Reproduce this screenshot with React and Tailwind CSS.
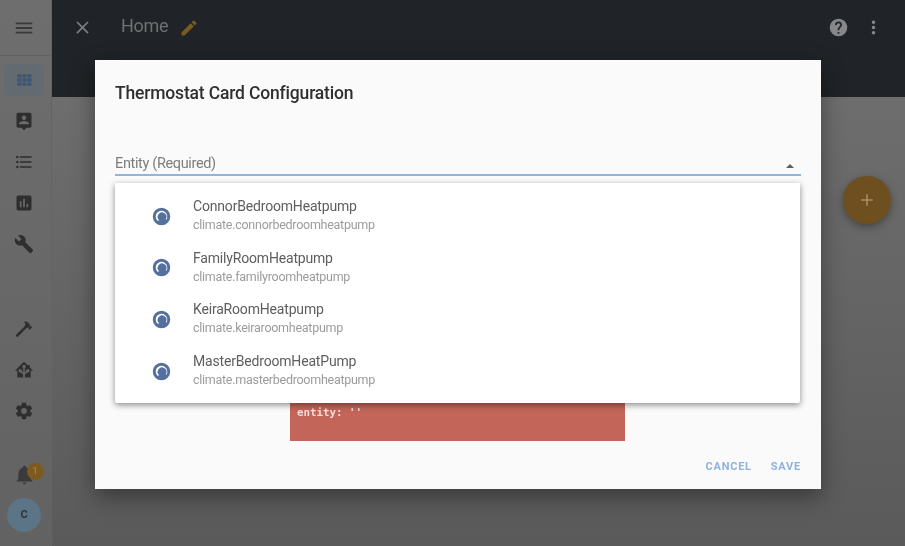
const paths = {
  menu: 'M3,6H21V8H3V6M3,11H21V13H3V11M3,16H21V18H3V16Z',
  close: 'M19,6.41L17.59,5L12,10.59L6.41,5L5,6.41L10.59,12L5,17.59L6.41,19L12,13.41L17.59,19L19,17.59L13.41,12L19,6.41Z',
  pencil: 'M20.71,7.04C21.1,6.65 21.1,6 20.71,5.63L18.37,3.29C18,2.9 17.35,2.9 16.96,3.29L15.12,5.12L18.87,8.87M3,17.25V21H6.75L17.81,9.93L14.06,6.18L3,17.25Z',
  help: 'M15.07,11.25L14.17,12.17C13.45,12.89 13,13.5 13,15H11V14.5C11,13.39 11.45,12.39 12.17,11.67L13.41,10.41C13.78,10.05 14,9.55 14,9C14,7.89 13.1,7 12,7A2,2 0 0,0 10,9H8A4,4 0 0,1 12,5A4,4 0 0,1 16,9C16,9.88 15.64,10.67 15.07,11.25M13,19H11V17H13M12,2A10,10 0 0,0 2,12A10,10 0 0,0 12,22A10,10 0 0,0 22,12C22,6.47 17.5,2 12,2Z',
  dots: 'M12,16A2,2 0 0,1 14,18A2,2 0 0,1 12,20A2,2 0 0,1 10,18A2,2 0 0,1 12,16M12,10A2,2 0 0,1 14,12A2,2 0 0,1 12,14A2,2 0 0,1 10,12A2,2 0 0,1 12,10M12,4A2,2 0 0,1 14,6A2,2 0 0,1 12,8A2,2 0 0,1 10,6A2,2 0 0,1 12,4Z',
  grid: 'M4,5H9V9H4ZM10,5H15V9H10ZM16,5H21V9H16ZM4,10H9V14H4ZM10,10H15V14H10ZM16,10H21V14H16ZM4,15H9V19H4ZM10,15H15V19H10ZM16,15H21V19H16Z',
  map: 'M18,16H6V15.1C6,13.1 10,12 12,12C14,12 18,13.1 18,15.1M12,5.3C13.5,5.3 14.7,6.5 14.7,8C14.7,9.5 13.5,10.7 12,10.7C10.5,10.7 9.3,9.5 9.3,8C9.3,6.5 10.5,5.3 12,5.3M19,2H5C3.89,2 3,2.89 3,4V18A2,2 0 0,0 5,20H9L12,23L15,20H19A2,2 0 0,0 21,18V4C21,2.89 20.1,2 19,2Z',
  list: 'M7,5H21V7H7V5M7,13V11H21V13H7M4,4.5A1.5,1.5 0 0,1 5.5,6A1.5,1.5 0 0,1 4,7.5A1.5,1.5 0 0,1 2.5,6A1.5,1.5 0 0,1 4,4.5M4,10.5A1.5,1.5 0 0,1 5.5,12A1.5,1.5 0 0,1 4,13.5A1.5,1.5 0 0,1 2.5,12A1.5,1.5 0 0,1 4,10.5M7,19V17H21V19H7M4,16.5A1.5,1.5 0 0,1 5.5,18A1.5,1.5 0 0,1 4,19.5A1.5,1.5 0 0,1 2.5,18A1.5,1.5 0 0,1 4,16.5Z',
  chart: 'M19,3H5C3.89,3 3,3.89 3,5V19A2,2 0 0,0 5,21H19A2,2 0 0,0 21,19V5C21,3.89 20.1,3 19,3M9,17H7V10H9V17M13,17H11V7H13V17M17,17H15V13H17V17Z',
  wrench: 'M22.7,19L13.6,9.9C14.5,7.6 14,4.9 12.1,3C10.1,1 7.1,0.6 4.7,1.7L9,6L6,9L1.6,4.7C0.4,7.1 0.9,10.1 2.9,12.1C4.8,14 7.5,14.5 9.8,13.6L18.9,22.7C19.3,23.1 19.9,23.1 20.3,22.7L22.6,20.4C23.1,20 23.1,19.3 22.7,19Z',
  hammer: 'M2 19.63L13.43 8.2L12.72 7.5L14.14 6.07L12 3.89C13.2 2.7 15.09 2.7 16.27 3.89L19.87 7.5L18.45 8.91H21.29L22 9.62L18.45 13.21L17.74 12.5V9.62L16.27 11.04L15.56 10.33L4.13 21.76L2 19.63Z',
  hass: 'M21.8,13H20V21H13V17.67L15.79,14.88L16.5,15C17.66,15 18.6,14.06 18.6,12.9C18.6,11.74 17.66,10.8 16.5,10.8A2.1,2.1 0 0,0 14.4,12.9L14.5,13.61L13,15.13V9.65C13.66,9.29 14.1,8.6 14.1,7.8A2.1,2.1 0 0,0 12,5.7A2.1,2.1 0 0,0 9.9,7.8C9.9,8.6 10.34,9.29 11,9.65V15.13L9.5,13.61L9.6,12.9A2.1,2.1 0 0,0 7.5,10.8A2.1,2.1 0 0,0 5.4,12.9A2.1,2.1 0 0,0 7.5,15L8.21,14.88L11,17.67V21H4V13H2.25C1.83,13 1.42,13 1.42,12.79C1.43,12.57 1.85,12.15 2.28,11.72L11,3C11.33,2.67 11.67,2.33 12,2.33C12.33,2.33 12.67,2.67 13,3L17,7V6H19V9L21.78,11.78C22.18,12.18 22.59,12.59 22.6,12.8C22.6,13 22.2,13 21.8,13Z',
  cog: 'M12,15.5A3.5,3.5 0 0,1 8.5,12A3.5,3.5 0 0,1 12,8.5A3.5,3.5 0 0,1 15.5,12A3.5,3.5 0 0,1 12,15.5M19.43,12.97C19.47,12.65 19.5,12.33 19.5,12C19.5,11.67 19.47,11.34 19.43,11L21.54,9.37C21.73,9.22 21.78,8.95 21.66,8.73L19.66,5.27C19.54,5.05 19.27,4.96 19.05,5.05L16.56,6.05C16.04,5.66 15.5,5.32 14.87,5.07L14.5,2.42C14.46,2.18 14.25,2 14,2H10C9.75,2 9.54,2.18 9.5,2.42L9.13,5.07C8.5,5.32 7.96,5.66 7.44,6.05L4.95,5.05C4.73,4.96 4.46,5.05 4.34,5.27L2.34,8.73C2.21,8.95 2.27,9.22 2.46,9.37L4.57,11C4.53,11.34 4.5,11.67 4.5,12C4.5,12.33 4.53,12.65 4.57,12.97L2.46,14.63C2.27,14.78 2.21,15.05 2.34,15.27L4.34,18.73C4.46,18.95 4.73,19.03 4.95,18.95L7.44,17.94C7.96,18.34 8.5,18.68 9.13,18.93L9.5,21.58C9.54,21.82 9.75,22 10,22H14C14.25,22 14.46,21.82 14.5,21.58L14.87,18.93C15.5,18.67 16.04,18.34 16.56,17.94L19.05,18.95C19.27,19.03 19.54,18.95 19.66,18.73L21.66,15.27C21.78,15.05 21.73,14.78 21.54,14.63L19.43,12.97Z',
  bell: 'M21,19V20H3V19L5,17V11C5,7.9 7.03,5.17 10,4.29C10,4.19 10,4.1 10,4A2,2 0 0,1 12,2A2,2 0 0,1 14,4C14,4.1 14,4.19 14,4.29C16.97,5.17 19,7.9 19,11V17L21,19M14,21A2,2 0 0,1 12,23A2,2 0 0,1 10,21',
  thermostat: 'M12,2A10,10 0 0,0 2,12A10,10 0 0,0 12,22A10,10 0 0,0 22,12A10,10 0 0,0 12,2ZM7.4,16.8A6.6,6.6 0 1,1 17.6,15.6L16.8,15.2A5,5 0 1,0 9.6,16.4Z',
  plus: 'M19,13H13V19H11V13H5V11H11V5H13V11H19V13Z',
};

const Icon = ({ name, className }) => (
  <svg viewBox="0 0 24 24" className={className} fill="currentColor" fillRule="evenodd">
    <path d={paths[name]} />
  </svg>
);

const topNav = ['grid', 'map', 'list', 'chart', 'wrench'];
const devNav = ['hammer', 'hass', 'cog'];

const entities = [
  ['ConnorBedroomHeatpump', 'climate.connorbedroomheatpump'],
  ['FamilyRoomHeatpump', 'climate.familyroomheatpump'],
  ['KeiraRoomHeatpump', 'climate.keiraroomheatpump'],
  ['MasterBedroomHeatPump', 'climate.masterbedroomheatpump'],
];

function Sidebar() {
  return (
    <aside className="flex w-[52px] shrink-0 flex-col border-r border-[#646464] bg-gradient-to-b from-[#6e6e6e] to-[#626262] text-[#2e2e2e]">
      <div className="flex h-14 shrink-0 items-center justify-center border-b border-[#626262] pr-[3px] text-[#3a3a3a]">
        <Icon name="menu" className="h-[22px] w-[22px]" />
      </div>
      <div className="flex flex-col gap-[9px] pt-[8px]">
        {topNav.map((name, i) => (
          <div
            key={name}
            className={`ml-[4px] flex h-[32px] w-[40px] items-center justify-center ${i === 0 ? 'rounded bg-[#636a70] text-[#3f5673]' : ''}`}
          >
            <Icon name={name} className="h-[20px] w-[20px]" />
          </div>
        ))}
      </div>
      <div className="mt-[53px] flex flex-col gap-[9px]">
        {devNav.map((name) => (
          <div key={name} className="ml-[4px] flex h-[32px] w-[40px] items-center justify-center">
            <Icon name={name} className="h-[20px] w-[20px]" />
          </div>
        ))}
      </div>
      <div className="mt-auto flex h-[103px] flex-col items-center border-t border-[#626262] pr-[3px] text-[#3a3a3a]">
        <div className="relative mt-[20px] h-[21px] w-[21px]">
          <Icon name="bell" className="h-[21px] w-[21px]" />
          <span className="absolute -right-[9px] -top-[1px] flex h-[17px] w-[17px] items-center justify-center rounded-full bg-[#7d5a1e] text-[9px] text-[#a58b5e]">
            1
          </span>
        </div>
        <div className="mt-[13px] flex h-[34px] w-[34px] items-center justify-center rounded-full bg-[#5b7587] text-[11px] font-bold text-[#2e3438]">
          C
        </div>
      </div>
    </aside>
  );
}

function Dialog() {
  return (
    <div className="absolute left-[95px] top-[60px] h-[429px] w-[726px] bg-[#fafafa] shadow-[0_8px_22px_rgba(0,0,0,0.4)]">
      <h2 className="pl-[20px] pt-[21px] text-[17.5px] font-medium leading-[24px] tracking-[-0.17px] text-[#2f2f2f]">
        Thermostat Card Configuration
      </h2>
      <div className="relative mx-[20px] mt-[49px] flex h-[22px] items-end justify-between border-b-2 border-[#8fb6df] pb-[1px]">
        <span className="text-[14.5px] leading-[18px] tracking-[-0.35px] text-[#7d7d7d]">Entity (Required)</span>
        <span className="mb-[5px] mr-[7px] h-0 w-0 border-x-[4px] border-b-[4px] border-x-transparent border-b-[#5f5f5f]" />
      </div>

      <div className="absolute left-[195px] top-[340px] h-[41px] w-[335px] bg-[#c36559] px-[7px] pt-[5px] font-['DejaVu_Sans_Mono',monospace] text-[10.8px] font-bold leading-[16px] text-[#f5dcd8]">
        entity: ''
      </div>

      <div className="absolute left-[20px] top-[123px] flex h-[220px] w-[685px] flex-col rounded-b-[2px] bg-white pt-[7.5px] shadow-[0_2px_6px_rgba(0,0,0,0.45)]">
        {entities.map(([name, id]) => (
          <div key={id} className="flex h-[51.6px] shrink-0 items-center pl-[36px]">
            <Icon name="thermostat" className="h-[21px] w-[21px] text-[#54709e]" />
            <div className="mb-[2px] ml-[21px]">
              <div className="text-[14px] leading-[18px] tracking-[-0.18px] text-[#5e5e5e]">{name}</div>
              <div className="mt-[1px] text-[12.5px] leading-[17px] tracking-[-0.27px] text-[#9c9c9c]">{id}</div>
            </div>
          </div>
        ))}
      </div>

      <div className="absolute bottom-[14px] right-[20px] flex gap-[19px] text-[11px] font-bold tracking-[0.07em] text-[#8fb3db]">
        <span>CANCEL</span>
        <span>SAVE</span>
      </div>
    </div>
  );
}

export default function App() {
  return (
    <div className="relative flex h-[546px] w-[905px] overflow-hidden font-['Roboto',sans-serif] blur-[0.5px]">
      <Sidebar />
      <main className="flex min-w-0 flex-1 flex-col bg-gradient-to-b from-[#727272] to-[#5a5a5a]">
        <header className="h-[97px] shrink-0 bg-[#202327] text-[#7b7d80]">
          <div className="flex h-[55px] items-center pl-[20px] pr-[21px]">
            <Icon name="close" className="h-[21px] w-[21px]" />
            <span className="mb-[5px] ml-[28px] text-[18px] tracking-[-0.3px] text-[#6f7174]">Home</span>
            <Icon name="pencil" className="ml-[11px] h-[20px] w-[20px] text-[#7a5a22]" />
            <Icon name="help" className="ml-auto h-[21px] w-[21px] text-[#85878a]" />
            <Icon name="dots" className="ml-[14px] h-[21px] w-[21px] text-[#85878a]" />
          </div>
        </header>
      </main>
      <Dialog />
      <div className="absolute left-[843px] top-[176px] flex h-[48px] w-[48px] items-center justify-center rounded-full bg-[#6e4f1f] text-[#a58b63] shadow-[0_3px_8px_rgba(0,0,0,0.35)]">
        <Icon name="plus" className="h-[20px] w-[20px]" />
      </div>
    </div>
  );
}
